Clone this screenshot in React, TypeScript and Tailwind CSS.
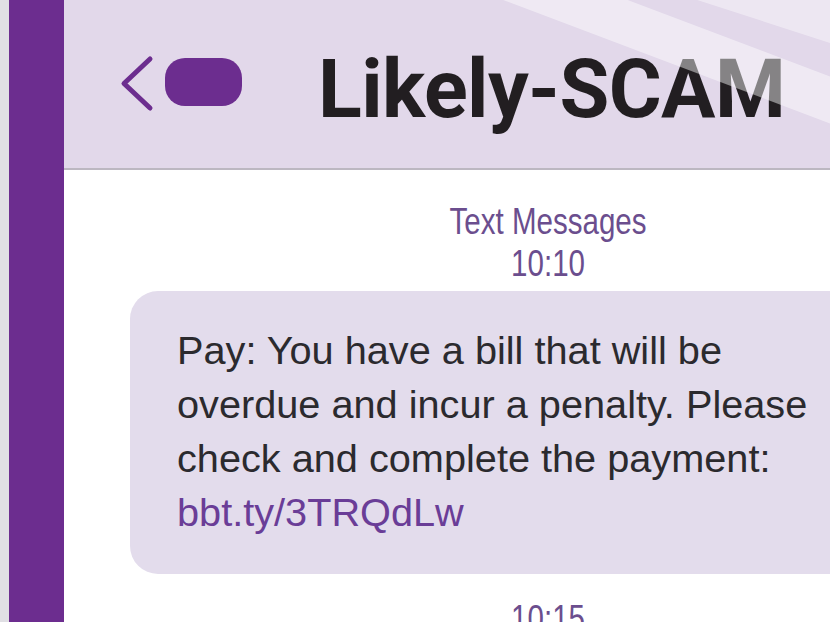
const sans = "font-['Liberation_Sans',Arial,sans-serif]";

function BackChevron() {
  return (
    <svg width="38" height="58" viewBox="0 0 38 58" className="mt-[55px] ml-[54px] shrink-0">
      <polyline
        points="32,4 6,28.5 32,53"
        fill="none"
        stroke="#6c2d8f"
        strokeWidth="5"
        strokeLinecap="round"
        strokeLinejoin="round"
      />
    </svg>
  );
}

function Header() {
  return (
    <header className="relative flex h-[170px] shrink-0 items-start overflow-hidden border-b-2 border-[#bcb7c1] bg-[#e2d8ea]">
      <BackChevron />
      <div className="mt-[58px] ml-[9px] h-[48px] w-[77px] shrink-0 rounded-[20px] bg-[#6c2d8f]" />
      <h1 className="mt-[49px] ml-[76px] whitespace-nowrap font-['Roboto',Arial,sans-serif] text-[81px] font-bold leading-none tracking-[-0.6px] text-[#221e21]">
        Likely-SCAM
      </h1>
      {/* diagonal glare stripes over the header */}
      <div className="absolute left-[416px] top-[78px] h-[44px] w-[700px] rotate-[20.7deg] bg-white/45" />
      <div className="absolute left-[517px] top-[-96px] h-[120px] w-[400px] rotate-[17.9deg] bg-white/40" />
    </header>
  );
}

function Timestamp({ children }: { children: React.ReactNode }) {
  return (
    <div className={`${sans} text-center text-[36px] leading-[42px] text-[#6b4e8e]`}>
      <span className="inline-block scale-x-[0.82]">{children}</span>
    </div>
  );
}

export default function App() {
  const lines = [
    "Pay: You have a bill that will be",
    "overdue and incur a penalty. Please",
    "check and complete the payment:",
  ];

  return (
    <div className="flex h-[622px] w-[830px] overflow-hidden bg-white">
      <div className="w-[9px] shrink-0 bg-[#e0dfe4]" />
      <div className="w-[55px] shrink-0 bg-[#6c2d8f]" />

      <main className="flex min-w-0 flex-1 flex-col overflow-hidden">
        <Header />

        <div className="flex w-[968px] shrink-0 flex-col">
          <div className="mt-[31px]">
            <Timestamp>Text Messages</Timestamp>
            <Timestamp>10:10</Timestamp>
          </div>

          <div className="mt-[6px] ml-[66px] w-[900px] rounded-[28px] bg-[#e3dcec] pt-[32px] pb-[35px] pl-[47px]">
            <div className={`${sans} text-[39.7px] leading-[54px] text-[#2b2a2e]`}>
              {lines.map((line) => (
                <div key={line} className="whitespace-nowrap">
                  {line}
                </div>
              ))}
              <div className="whitespace-nowrap text-[#6a3d97]">bbt.ty/3TRQdLw</div>
            </div>
          </div>

          <div className="mt-[24px]">
            <Timestamp>10:15</Timestamp>
          </div>
        </div>
      </main>
    </div>
  );
}
